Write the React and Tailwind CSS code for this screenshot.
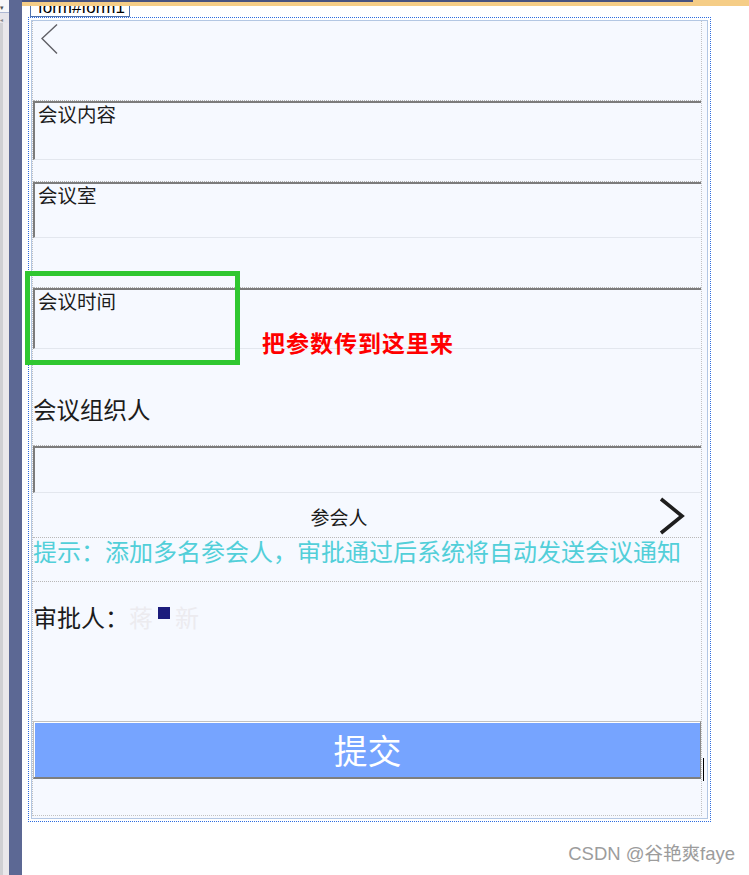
import React from "react";

const CJK = "font-['Noto_Sans_CJK_SC',sans-serif]";

function Field({ h, label }) {
  return (
    <div className={`border-t border-dotted border-[#b4b4b4] ${h}`}>
      <div className="h-full border-t-2 border-l-2 border-b border-t-[#7c7c7c] border-l-[#7c7c7c] border-b-[#e3e7ee] pl-[3px] pt-[1px]">
        {label ? (
          <div className={`text-[19.5px] leading-[19px] text-[#1c1c1c] ${CJK}`}>{label}</div>
        ) : null}
      </div>
    </div>
  );
}

export default function App() {
  return (
    <div className="relative w-[749px] h-[875px] overflow-hidden bg-white flex">
      {/* left chrome strip */}
      <div className="w-[22px] h-full flex shrink-0">
        <div className="w-[9px] h-full flex flex-col">
          <div className="h-[13px] bg-[#f7f7f9] border-b border-[#aeb8d4] relative">
            <span className="absolute left-[0px] top-[4px] text-[7px] leading-[7px] text-[#555]">▾</span>
          </div>
          <div className="h-[10px] bg-[#e6e4ea] relative">
            <span className="absolute left-[0px] top-[4px] text-[6px] leading-[6px] text-[#888]">◂</span>
          </div>
          <div className="flex-1 flex">
            <div className="w-[3px] bg-[#cfcfd3]" />
            <div className="flex-1 bg-[#e9e7eb]" />
          </div>
        </div>
        <div className="w-[13px] h-full bg-[#5c6894]" />
      </div>

      {/* main area */}
      <div className="flex-1 flex flex-col">
        <div className="h-[6px] flex flex-col">
          <div className="h-[2px] flex">
            <div className="w-[671px] bg-[#465280]" />
            <div className="flex-1 bg-[#f5cd87]" />
          </div>
          <div className="h-[4px] bg-[#f5cd87]" />
        </div>

        <div className="h-[11px] pl-[8px]">
          <div className="w-[100px] h-full border-x border-b border-[#4f72ad] overflow-hidden bg-white">
            <div className="-mt-[7px] pl-[7px] text-[17px] leading-[17px] text-black font-['Liberation_Sans',sans-serif]">
              form#form1
            </div>
          </div>
        </div>

        {/* outer dotted selection box */}
        <div className="ml-[6px] w-[683px] h-[805px] border border-dotted border-[#2d6de0] p-[2px]">
          <div className="h-full border border-[#b3c7e3] bg-[#f6f9ff] pr-[5px] pb-[2px] flex flex-col">
            <div className="flex-1 flex flex-col border-l border-r border-b border-dotted border-[#c2c2c2]">
              {/* header */}
              <div className="h-[79px] pl-[8px] pt-[3px]">
                <svg width="17" height="31" viewBox="0 0 17 31" className="block">
                  <polyline points="16,0.5 1,14.5 16,29.5" fill="none" stroke="#606066" strokeWidth="1.4" />
                </svg>
              </div>

              <Field h="h-[60px]" label="会议内容" />
              <div className="h-[21px]" />
              <Field h="h-[57px]" label="会议室" />
              <div className="h-[49px]" />
              <Field h="h-[62px]" label="会议时间" />

              <div className={`mt-[49px] text-[23.5px] leading-[23px] text-[#1c1c1c] ${CJK}`}>会议组织人</div>

              <div className="mt-[24px]">
                <Field h="h-[48px]" />
              </div>

              {/* 参会人 row */}
              <div className="h-[45px] flex items-center pt-[2px] border-b border-dotted border-[#b8b8b8]">
                <div className={`flex-1 text-center text-[19px] leading-[19px] text-[#1c1c1c] ${CJK}`}>参会人</div>
                <svg width="26" height="38" viewBox="0 0 26 38" className="ml-[14px] mr-[16px] block">
                  <polyline points="2,2 23,19 2,36" fill="none" stroke="#1e1e1e" strokeWidth="3.6" />
                </svg>
              </div>

              {/* hint */}
              <div className="h-[44px] border-b border-dotted border-[#b8b8b8]">
                <div className={`text-[24px] leading-[24px] pt-[1px] text-[#52cfd9] whitespace-nowrap ${CJK}`}>
                  提示：添加多名参会人，审批通过后系统将自动发送会议通知
                </div>
              </div>

              {/* approver */}
              <div className={`mt-[23px] h-[24px] flex items-center text-[24px] leading-[24px] ${CJK}`}>
                <span className="text-[#1c1c1c]">审批人：</span>
                <span className="text-[#ecebef]">蒋</span>
                <span className="inline-block w-[12px] h-[12px] bg-[#1c1c7c] ml-[5px] mb-[8px]" />
                <span className="text-[#ecebef] ml-[5px]">新</span>
              </div>

              {/* submit */}
              <div className="mt-[92px] relative">
                <div className="h-[58px] border-t border-l border-[#c0c0c0] border-r border-r-[#8a8a8a] border-b-2 border-b-[#7e7e7e]">
                  <div className="h-full border-t border-l border-white bg-[#76a4ff] flex items-center justify-center">
                    <span className={`text-[34px] leading-[34px] text-white ${CJK}`}>提交</span>
                  </div>
                </div>
                <div className="absolute left-[calc(100%+2px)] top-[37px] w-[1px] h-[23px] bg-black" />
              </div>
              <div className="flex-1" />
            </div>
          </div>
        </div>

        <div className="mt-[23px] pr-[14px] text-right text-[18.5px] leading-[18px] text-[#9c9c9c] font-['Liberation_Sans','Noto_Sans_CJK_SC',sans-serif]">
          CSDN @谷艳爽faye
        </div>
      </div>

      {/* annotations */}
      <div className="absolute left-[25px] top-[271px] w-[215px] h-[94px] border-[5px] border-[#30c730]" />
      <div className={`absolute left-[262px] top-[331px] text-[23px] leading-[23px] tracking-[1px] font-bold text-[#ff0000] whitespace-nowrap ${CJK}`}>
        把参数传到这里来
      </div>
    </div>
  );
}
